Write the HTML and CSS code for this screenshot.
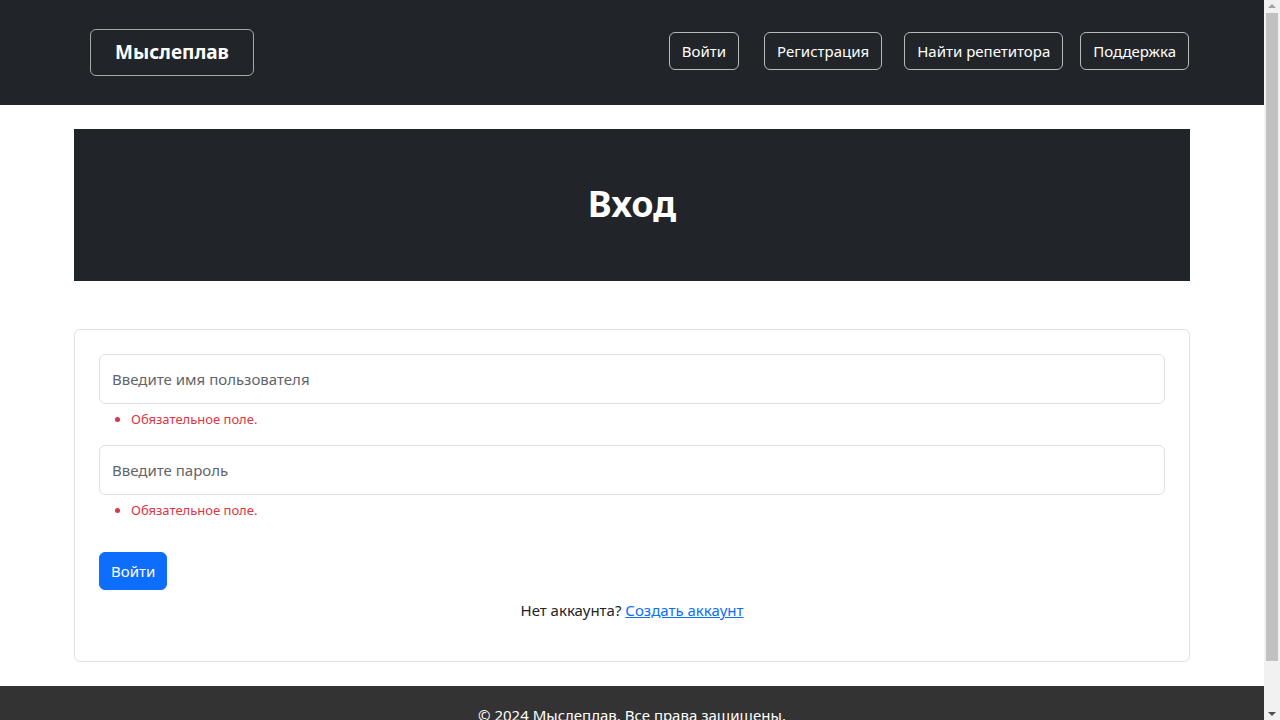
FILE: index.html
```html
<!DOCTYPE html>
<html lang="ru">
<head>
<meta charset="utf-8">
<title>Вход — Мыслеплав</title>
<link rel="stylesheet" href="styles.css">
</head>
<body>
<header class="navbar">
  <div class="navbar-inner">
    <a class="brand" href="#">Мыслеплав</a>
    <nav class="nav">
      <a class="nav-btn" href="#">Войти</a>
      <a class="nav-btn" href="#">Регистрация</a>
      <a class="nav-btn" href="#">Найти репетитора</a>
      <a class="nav-btn" href="#">Поддержка</a>
    </nav>
  </div>
</header>
<main class="container">
  <section class="hero">
    <h1 class="hero-title">Вход</h1>
  </section>
  <section class="card">
    <form class="form">
      <div class="field">
        <input class="input" type="text" placeholder="Введите имя пользователя">
        <ul class="errors"><li>Обязательное поле.</li></ul>
      </div>
      <div class="field">
        <input class="input" type="password" placeholder="Введите пароль">
        <ul class="errors"><li>Обязательное поле.</li></ul>
      </div>
      <button class="btn-primary" type="button">Войти</button>
      <p class="signup">Нет аккаунта? <a href="#">Создать аккаунт</a></p>
    </form>
  </section>
</main>
<footer class="footer">
  <p>© 2024 Мыслеплав. Все права защищены.</p>
</footer>
<div class="scrollbar" aria-hidden="true">
  <span class="arrow up"></span>
  <span class="thumb"></span>
  <span class="arrow down"></span>
</div>
</body>
</html>
```
FILE: styles.css
```css
* { box-sizing: border-box; }
html, body { margin: 0; }
body {
  font-family: "Noto Sans", "Open Sans", sans-serif;
  font-size: 15px;
  line-height: 1.5;
  color: #212529;
  background: #fff;
  margin-right: 16px;
}
.navbar {
  background: #212529;
  height: 105px;
  display: flex;
  align-items: center;
}
.navbar-inner {
  width: 100%;
  padding: 0 75px 0 90px;
  display: flex;
  align-items: center;
  justify-content: space-between;
}
.brand {
  display: inline-block;
  color: #fff;
  text-decoration: none;
  font-weight: 700;
  font-size: 19px;
  line-height: 25px;
  padding: 10px 24px;
  border: 1px solid #a6a8aa;
  border-radius: 6px;
  margin-top: 0;
}
.nav {
  display: flex;
  align-items: center;
  gap: 24px;
  margin-top: -4px;
}
.nav-btn:first-child { margin-right: 1px; }
.nav-btn:nth-child(2) { margin-right: -2px; }
.nav-btn:last-child { margin-left: -7px; }
.nav-btn {
  color: #fff;
  text-decoration: none;
  font-size: 15px;
  line-height: 24px;
  padding: 6px 12px;
  border: 1px solid #b7b9bb;
  border-radius: 6px;
}
.container {
  width: 1116px;
  margin: 0 auto;
  padding-top: 24px;
  padding-bottom: 24px;
}
.hero {
  background: #212529;
  height: 152px;
  display: flex;
  align-items: center;
  justify-content: center;
}
.hero-title {
  margin: 0 0 2px;
  color: #fff;
  font-size: 36px;
  font-weight: 700;
  line-height: 1.2;
}
.card {
  margin-top: 48px;
  border: 1px solid #dee2e6;
  border-radius: 6px;
  padding: 24px 24px 1px;
}
.field { margin-bottom: 15px; }
.input {
  display: block;
  width: 100%;
  height: 50px;
  padding: 12px 12px;
  font-family: inherit;
  font-size: 15px;
  color: #212529;
  border: 1px solid #dee2e6;
  border-radius: 6px;
  background: #fff;
}
.input::placeholder { color: #5f656b; }
.errors {
  margin: 5px 0 0;
  padding-left: 32px;
  color: #dc3545;
  font-size: 13px;
  line-height: 21px;
}
.btn-primary {
  display: inline-block;
  margin-top: 16px;
  background: #0d6efd;
  color: #fff;
  border: 1px solid #0d6efd;
  border-radius: 6px;
  font-family: inherit;
  font-size: 15px;
  line-height: 24px;
  padding: 6px 11px;
}
.signup {
  margin: 8px 0 16px;
  text-align: center;
  font-size: 15px;
  line-height: 24px;
  padding-bottom: 22px;
}
.signup a { color: #0d6efd; }
.footer {
  background: #333;
  color: #fff;
  text-align: center;
  padding: 18px 0 20px;
}
.footer p { margin: 0; font-size: 15px; }
.scrollbar {
  position: fixed;
  top: 0;
  right: 0;
  width: 16px;
  height: 100vh;
  background: #f1f1f1;
}
.scrollbar .thumb {
  position: absolute;
  left: 2px;
  right: 2px;
  top: 13px;
  height: 648px;
  background: #c1c1c1;
}
.scrollbar .arrow {
  position: absolute;
  left: 4px;
  width: 0;
  height: 0;
  border-left: 4px solid transparent;
  border-right: 4px solid transparent;
}
.scrollbar .up { top: 4px; border-bottom: 4px solid #a3a3a3; }
.scrollbar .down { bottom: 4px; border-top: 4px solid #505050; }
```
